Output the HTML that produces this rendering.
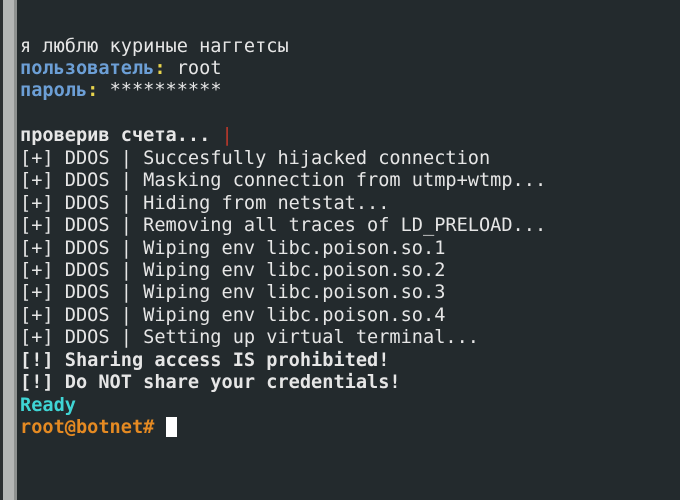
<!DOCTYPE html>
<html><head><meta charset="utf-8"><style>
html,body{margin:0;padding:0;width:680px;height:500px;overflow:hidden;background:#232a2d;}
.bar1{position:absolute;left:0;top:0;width:3px;height:500px;background:#2b2f31;}
.bar2{position:absolute;left:3px;top:0;width:11px;height:500px;background:#b4b6b5;}
.bar3{position:absolute;left:14px;top:0;width:3px;height:500px;background:#8e9190;}
pre{position:absolute;left:20px;top:35.5px;margin:0;font-family:"DejaVu Sans Mono","Liberation Mono",monospace;font-size:18.6px;line-height:22.45px;color:#e6e6e6;}
.b{font-weight:bold}
.blue{color:#6c9fd6;font-weight:bold}
.y{color:#e8d44d;font-weight:bold}
.cy{color:#3fd5d5;font-weight:bold}
.or{color:#e58a22;font-weight:bold}
.red{color:#c0392b}
.cur{display:inline-block;width:11px;height:20px;background:#fff;vertical-align:-4px;}
</style></head><body>
<div class="bar1"></div><div class="bar2"></div><div class="bar3"></div>
<pre>я люблю куриные наггетсы
<span class="blue">пользователь</span><span class="y">:</span> root
<span class="blue">пароль</span><span class="y">:</span> **********

<span class="b">проверив счета...</span> <span class="red">|</span>
[+] DDOS | Succesfully hijacked connection
[+] DDOS | Masking connection from utmp+wtmp...
[+] DDOS | Hiding from netstat...
[+] DDOS | Removing all traces of LD_PRELOAD...
[+] DDOS | Wiping env libc.poison.so.1
[+] DDOS | Wiping env libc.poison.so.2
[+] DDOS | Wiping env libc.poison.so.3
[+] DDOS | Wiping env libc.poison.so.4
[+] DDOS | Setting up virtual terminal...
<span class="b">[!] Sharing access IS prohibited!</span>
<span class="b">[!] Do NOT share your credentials!</span>
<span class="cy">Ready</span>
<span class="or">root@botnet#</span> <span class="cur"></span></pre>
</body></html>
